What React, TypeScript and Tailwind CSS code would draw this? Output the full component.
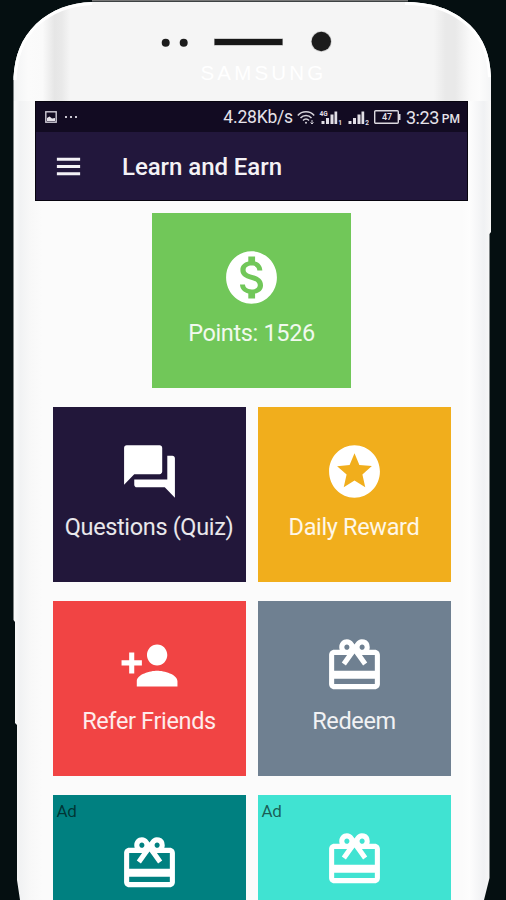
import React from 'react';
import { IconType } from 'react-icons';
import {
  MdMenu,
  MdMonetizationOn,
  MdPersonAdd,
  MdQuestionAnswer,
  MdRedeem,
  MdStars,
} from 'react-icons/md';

const PhoneBody = () => (
  <svg
    className="absolute inset-0 h-[900px] w-[506px]"
    viewBox="0 0 506 900"
    fill="none"
  >
    <defs>
      <linearGradient id="bezel" gradientUnits="userSpaceOnUse" x1="14" y1="0" x2="491" y2="0">
        <stop offset="0" stopColor="#f3f4f5" />
        <stop offset="0.03" stopColor="#fbfbfb" />
        <stop offset="0.06" stopColor="#fafafa" />
        <stop offset="0.085" stopColor="#e6e6e6" />
        <stop offset="0.1" stopColor="#e9e9e9" />
        <stop offset="0.118" stopColor="#f5f5f5" />
        <stop offset="0.88" stopColor="#f5f5f5" />
        <stop offset="0.905" stopColor="#e9e9e9" />
        <stop offset="0.925" stopColor="#e9e9e9" />
        <stop offset="0.955" stopColor="#f9f9f9" />
        <stop offset="0.975" stopColor="#fcfcfc" />
        <stop offset="1" stopColor="#f4f5f6" />
      </linearGradient>
      <linearGradient id="sides" gradientUnits="userSpaceOnUse" x1="14" y1="0" x2="491" y2="0">
        <stop offset="0" stopColor="#fafafa" />
        <stop offset="0.012" stopColor="#f1f2f3" />
        <stop offset="0.035" stopColor="#f8f8f8" />
        <stop offset="0.06" stopColor="#fbfbfb" />
        <stop offset="0.94" stopColor="#fbfbfb" />
        <stop offset="0.955" stopColor="#fdfdfd" />
        <stop offset="0.985" stopColor="#f0f1f3" />
        <stop offset="1" stopColor="#f8f8f8" />
      </linearGradient>
      <clipPath id="outline">
        <path d="M92 2H405C430 2 452 8 470 25C484 39 490 55 491 77V232L489.5 234V878L484 900H20L17 880V725L15 723V622L13.500 620V77C15 55 21 39 36 24C52 9 70 3 92 2Z" />
      </clipPath>
    </defs>
    <path d="M92 0.500H408" stroke="#777" strokeWidth="2" />
    <g clipPath="url(#outline)">
      <rect width="506" height="101" fill="url(#bezel)" />
      <rect y="101" width="506" height="799" fill="url(#sides)" />
      <path
        d="M13.500 80C15 55 21 39 36 24C52 9 70 3 92 2M405 2C430 2 452 8 470 25C484 39 490 55 491 77"
        stroke="#fff"
        strokeWidth="6"
      />
    </g>
    <circle cx="165.700" cy="42.800" r="4" fill="#1c1c1c" />
    <circle cx="183.700" cy="42.800" r="4" fill="#1c1c1c" />
    <path d="M214 42H283" stroke="#ccc" strokeWidth="8" />
    <path d="M214.500 42H282.500" stroke="#171717" strokeWidth="6" />
    <circle cx="321.300" cy="41.500" r="10.500" fill="#d0d0d0" />
    <circle cx="321.300" cy="41.500" r="9.700" fill="#1c1c1c" />
  </svg>
);

const PictureIcon = () => (
  <svg className="h-3 w-3" viewBox="0 0 12 12">
    <rect x="0.800" y="0.800" width="10.400" height="10.400" fill="none" stroke="#cfcbd6" strokeWidth="1.400" />
    <path d="M2 10V7L4.500 5.500L7 7.500L10 7V10Z" fill="#e6e3ea" />
  </svg>
);

const WifiIcon = () => (
  <svg className="h-[15px] w-[18px]" viewBox="0 0 18 15" fill="none" stroke="#d5d2da" strokeWidth="1.500">
    <path d="M0.800 5.500C5 0.500 13 0.500 17.200 5.500" />
    <path d="M3.500 8C6.500 4.500 11.500 4.500 14.500 8" />
    <path d="M6 10.500C7.800 8.500 10.200 8.500 12 10.500" />
    <circle cx="9" cy="12.800" r="1" fill="#d5d2da" stroke="none" />
    <path d="M15 10V14M13.500 12.500L15 14L16.500 12.500" strokeWidth="1" />
  </svg>
);

const SignalIcon = ({ sim, network }: { sim: string; network?: string }) => (
  <svg className="h-[17px] w-[23px]" viewBox="0 0 23 17" fill="#e2dfe6">
    <rect x="2.500" y="12" width="3" height="3" />
    <rect x="7" y="9" width="3" height="6" />
    <rect x="11.500" y="5.500" width="3" height="9.500" />
    <rect x="15.500" y="2.500" width="2.700" height="12.500" />
    {network && (
      <text x="0.500" y="7" fontSize="6.500" fontWeight="700" fontFamily="Roboto, sans-serif">
        {network}
      </text>
    )}
    <text x="19.200" y="16" fontSize="6.500" fontWeight="700" fontFamily="Roboto, sans-serif">
      {sim}
    </text>
  </svg>
);

const BatteryIcon = () => (
  <svg className="h-[14px] w-[27px]" viewBox="0 0 27 14">
    <rect x="0.700" y="0.700" width="23.600" height="12.600" rx="1" fill="none" stroke="#dcd9e0" strokeWidth="1.400" />
    <rect x="24.500" y="4" width="2" height="6" fill="#dcd9e0" />
    <text x="13" y="10.200" textAnchor="middle" fontSize="9" fontWeight="500" fontFamily="Roboto, sans-serif" fill="#e6e3ea">
      47
    </text>
  </svg>
);

const StatusBar = () => (
  <div className="flex h-[30px] flex-row items-center bg-[#120b22] pr-[7px] pl-[9px] text-[#e6e3ea]">
    <PictureIcon />
    <div className="ml-2 flex flex-row gap-[3px]">
      <span className="h-[2px] w-[2px] bg-[#c9c5d0]" />
      <span className="h-[2px] w-[2px] bg-[#c9c5d0]" />
      <span className="h-[2px] w-[2px] bg-[#c9c5d0]" />
    </div>
    <div className="flex flex-grow flex-row items-center justify-end">
      <span className="text-[17.500px] tracking-[-0.200px]">4.28Kb/s</span>
      <span className="ml-1"><WifiIcon /></span>
      <span className="ml-1"><SignalIcon sim="1" network="4G" /></span>
      <span className="ml-1"><SignalIcon sim="2" /></span>
      <span className="ml-[5px]"><BatteryIcon /></span>
      <span className="ml-[5px] text-[18px] tracking-[-0.450px]">3:23</span>
      <span className="ml-[3px] pt-1 text-[12px] font-medium">PM</span>
    </div>
  </div>
);

const Tile = ({
  icon: Icon,
  label,
  color,
  size = 'w-[193px]',
  iconOffset = 'mt-[33px]',
  ad,
}: {
  icon: IconType;
  label?: string;
  color: string;
  size?: string;
  iconOffset?: string;
  ad?: boolean;
}) => (
  <div className={`relative flex h-[175px] flex-shrink-0 flex-col items-center ${size} ${color}`}>
    {ad && (
      <span className="absolute top-[5px] left-1 text-[17px] leading-[22px] tracking-[-0.300px] text-black/60">Ad</span>
    )}
    <Icon className={`h-[63px] w-[61px] text-white ${iconOffset}`} preserveAspectRatio="none" />
    {label && (
      <span className="mt-[9px] text-[23.500px] leading-[30px] tracking-[-0.350px] whitespace-nowrap text-white/90">
        {label}
      </span>
    )}
  </div>
);

export default function App() {
  return (
    <div className="relative h-[900px] w-[506px] overflow-hidden bg-[#050f11] font-[Roboto,sans-serif]">
      <PhoneBody />
      <div className="relative flex flex-col">
        <div className="flex h-[101px] items-end justify-center pb-[15px] pl-[21px]">
          <span className="font-['Liberation_Sans',sans-serif] text-[20.500px] leading-[26px] tracking-[3.200px] text-white">
            SAMSUNG
          </span>
        </div>
        <div className="ml-[35px] w-[433px]">
          <div className="h-[100px] border border-[#07040f] bg-[#22173c]">
            <StatusBar />
            <div className="flex h-[68px] flex-row items-center pl-[17px]">
              <MdMenu className="h-[35px] w-[31px] text-[#f4f2f6]" preserveAspectRatio="none" />
              <span className="ml-[38px] pt-[2px] text-[24px] font-medium tracking-[-0.050px] text-[#f4f2f6]">
                Learn and Earn
              </span>
            </div>
          </div>
          <div className="flex flex-col items-center pt-3">
            <Tile icon={MdMonetizationOn} label="Points: 1526" color="bg-[#71c759]" size="w-[199px]" />
            <div className="mt-[19px] grid grid-cols-2 gap-x-3 gap-y-[19px]">
              <Tile icon={MdQuestionAnswer} label="Questions (Quiz)" color="bg-[#22173a]" />
              <Tile icon={MdStars} label="Daily Reward" color="bg-[#f1ae1c]" />
              <Tile icon={MdPersonAdd} label="Refer Friends" color="bg-[#f14444]" />
              <Tile icon={MdRedeem} label="Redeem" color="bg-[#6f8091]" />
              <Tile icon={MdRedeem} color="bg-[#008080]" iconOffset="mt-[37px]" ad />
              <Tile icon={MdRedeem} color="bg-[#40e3d2]" ad />
            </div>
          </div>
        </div>
      </div>
    </div>
  );
}
